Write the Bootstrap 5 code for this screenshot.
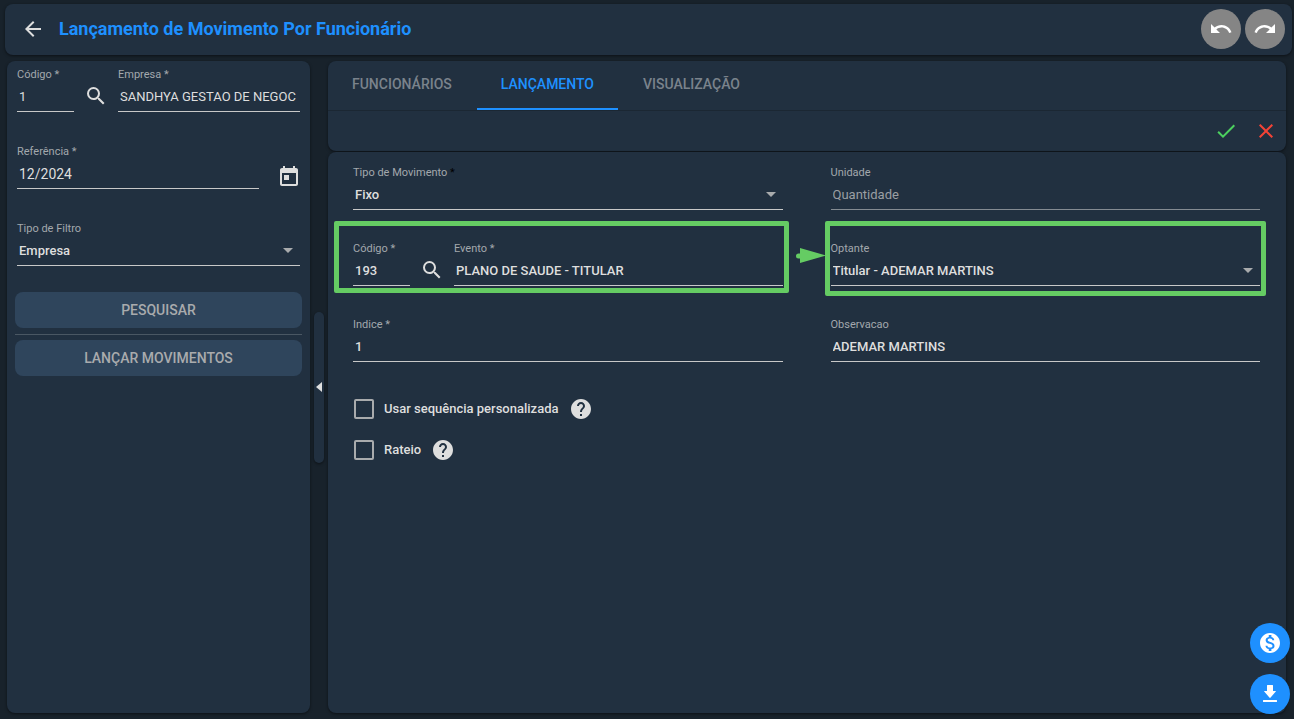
<!DOCTYPE html>
<html lang="pt-BR">
<head>
<meta charset="utf-8">
<meta name="viewport" content="width=device-width, initial-scale=1">
<title>Lançamento de Movimento Por Funcionário</title>
<link href="https://cdn.jsdelivr.net/npm/bootstrap@5.3.0/dist/css/bootstrap.min.css" rel="stylesheet">
<style>
  :root { --page: #18222b; --panel: #213040; --accent: #1e90ff; --ink: #dedede; --muted: #a3a8ad; --mark: #65cc63; }
  body { background: var(--page); color: var(--ink); font: 500 13px/16px Roboto, "Liberation Sans", sans-serif; }
  svg { display: block; fill: currentColor; flex: none; }
  .panel { background: var(--panel); border-radius: 8px; box-shadow: 0 1px 3px rgba(0,0,0,.5); }
  .app-shell { padding: 4px 2px 6px 5px; gap: 6px; }
  .topbar { min-height: 51px; padding: 4px 7px 6px 16px; }
  .topbar h1 { font-size: 18px; line-height: 24px; font-weight: 700; color: var(--accent); margin-left: 14px; }
  .icon-btn { background: none; border: 0; padding: 0; color: inherit; }
  .round-btn { width: 40px; height: 40px; border: 0; border-radius: 50%; padding: 0; color: #fff; background: #858585; display: grid; place-items: center; }
  .round-btn.fab { background: var(--accent); }
  .workspace { padding: 0 6px 0 2px; gap: 4px; }
  .filters { width: 303px; padding: 5px 8px; }
  .filter-fields { padding: 0 2px; gap: 31px; }
  .filter-actions { margin-top: 26px; }
  .fld label { display: block; height: 16px; font-size: 11px; font-weight: 400; line-height: 18px; color: var(--muted); white-space: nowrap; }
  .fld input, .fld select { display: block; width: 100%; height: 30px; padding: 0 2px; border: 0; border-bottom: 1px solid #c8c8c8; border-radius: 0; background-color: transparent; color: var(--ink); font: inherit; outline: 0; }
  .fld select { appearance: none; background: url("data:image/svg+xml,%3Csvg xmlns='http://www.w3.org/2000/svg' width='10' height='5'%3E%3Cpath fill='%23a9abad' d='M0 0h10L5 5z'/%3E%3C/svg%3E") no-repeat right 7px top 12px; }
  .fld option { background: var(--panel); }
  .fld input:disabled { color: #9b9fa3; border-color: #848b92; font-weight: 400; }
  .filters .fld input { font-weight: 400; }
  .filters .fld input.month { font-size: 14px; }
  .code-fld { width: 57px; }
  .lookup { gap: 10px; }
  .lookup .icon-btn { margin-bottom: 4px; }
  .date-row { gap: 18px; margin-right: -1px; }
  .action-btn { height: 36px; border: 0; border-radius: 8px; background: #2f455c; color: #a9abad; font-size: 14px; font-weight: 500; }
  .split { border-top: 1px solid #4a5763; margin: 6px 0 5px; }
  .collapse-handle { width: 10px; height: 151px; border: 0; padding: 0; border-radius: 5px; color: var(--ink); }
  .tab-strip { border-bottom: 1px solid #1b2733; gap: 1px; }
  .tab-strip button { height: 49px; padding: 0 24px 2px; border: 0; border-bottom: 2px solid transparent; background: none; color: #7a838c; font-size: 14px; font-weight: 500; }
  .tab-strip button.active { color: var(--accent); border-color: var(--accent); }
  .tools { height: 40px; padding: 0 8px; }
  .confirm { color: #4cd15f; }
  .cancel { color: #f44336; }
  .entry { padding: 12px 26px 12px 25px; margin-top: 1px; }
  .entry .row { row-gap: 30px; }
  .marked::before { content: ""; position: absolute; inset: -19px -6px -7px -19px; border: 5px solid var(--mark); border-radius: 2px; pointer-events: none; }
  .marked.tall::before { inset: -19px -6px -10px -6px; }
  .arrow-mark { position: absolute; left: -35px; top: 8px; color: var(--mark); }
  .checks { margin-top: 35px; gap: 17px; }
  .checks input { appearance: none; width: 20px; height: 20px; margin: 0 10px 0 1px; border: 2px solid #a9abad; border-radius: 2px; }
  .checks input:checked { background: var(--accent); }
  .checks label { margin-right: 10px; }
  .fabs { position: fixed; right: 4px; bottom: 5px; gap: 11px; }
</style>
</head>
<body>
<svg class="d-none" aria-hidden="true">
  <symbol id="search" viewBox="0 0 24 24"><path d="M15.5 14h-.79l-.28-.27A6.47 6.47 0 0 0 16 9.5 6.5 6.5 0 1 0 9.500 16c1.610 0 3.090-.59 4.230-1.570l.27.28v.79l5 4.990L20.490 19l-4.990-5zm-6 0C7.010 14 5 11.990 5 9.500S7.010 5 9.500 5 14 7.010 14 9.500 11.990 14 9.500 14z"/></symbol>
  <symbol id="help" viewBox="0 0 24 24"><path d="M12 2C6.480 2 2 6.480 2 12s4.480 10 10 10 10-4.480 10-10S17.520 2 12 2zm1 17h-2v-2h2v2zm2.070-7.750l-.9.92C13.450 12.900 13 13.500 13 15h-2v-.5c0-1.100.45-2.100 1.170-2.830l1.240-1.260c.37-.36.59-.86.59-1.410 0-1.100-.9-2-2-2s-2 .9-2 2H8c0-2.210 1.790-4 4-4s4 1.790 4 4c0 .88-.36 1.680-.93 2.250z"/></symbol>
</svg>

<div class="app-shell d-flex flex-column min-vh-100">
  <header class="topbar panel d-flex align-items-center">
    <button class="icon-btn" type="button" aria-label="Voltar"><svg width="24" height="24" viewBox="0 0 24 24"><path d="M20 11H7.830l5.590-5.590L12 4l-8 8 8 8 1.410-1.410L7.830 13H20v-2z"/></svg></button>
    <h1 class="mb-0 me-auto">Lançamento de Movimento Por Funcionário</h1>
    <div class="d-flex gap-1">
      <button class="round-btn" type="button" aria-label="Desfazer"><svg width="24" height="24" viewBox="0 0 24 24"><path d="M12.500 8c-2.650 0-5.050.99-6.900 2.600L2 7v9h9l-3.620-3.620c1.390-1.160 3.160-1.880 5.120-1.880 3.540 0 6.550 2.310 7.600 5.500l2.370-.78C21.080 11.030 17.150 8 12.500 8z"/></svg></button>
      <button class="round-btn" type="button" aria-label="Refazer"><svg width="24" height="24" viewBox="0 0 24 24"><path d="M18.400 10.600C16.550 8.990 14.150 8 11.500 8c-4.650 0-8.580 3.030-9.960 7.220L3.900 16c1.050-3.190 4.050-5.500 7.600-5.500 1.950 0 3.730.72 5.120 1.880L13 16h9V7l-3.600 3.600z"/></svg></button>
    </div>
  </header>

  <div class="workspace d-flex flex-grow-1">
    <aside class="filters panel flex-shrink-0">
      <div class="filter-fields d-flex flex-column">
        <div class="lookup d-flex align-items-end">
          <div class="fld code-fld"><label for="emp-cod">Código *</label><input id="emp-cod" value="1"></div>
          <button class="icon-btn" type="button" aria-label="Buscar empresa"><svg width="24" height="24"><use href="#search"/></svg></button>
          <div class="fld flex-fill"><label for="emp">Empresa *</label><input id="emp" value="SANDHYA GESTAO DE NEGOC"></div>
        </div>
        <div class="date-row d-flex align-items-end">
          <div class="fld flex-fill"><label for="ref">Referência *</label><input id="ref" class="month" value="12/2024"></div>
          <button class="icon-btn" type="button" aria-label="Abrir calendário"><svg width="24" height="24" viewBox="0 0 24 24"><path d="M19 3h-1V1h-2v2H8V1H6v2H5c-1.110 0-1.990.9-1.990 2L3 19c0 1.100.89 2 2 2h14c1.100 0 2-.9 2-2V5c0-1.100-.9-2-2-2zm0 16H5V8h14v11zM7 10h5v5H7z"/></svg></button>
        </div>
        <div class="fld"><label for="filtro">Tipo de Filtro</label><select id="filtro"><option>Empresa</option></select></div>
      </div>
      <div class="filter-actions d-flex flex-column">
        <button class="action-btn" type="button">PESQUISAR</button>
        <div class="split"></div>
        <button class="action-btn" type="button">LANÇAR MOVIMENTOS</button>
      </div>
    </aside>

    <button class="collapse-handle panel flex-shrink-0 align-self-center d-flex align-items-center justify-content-center" type="button" aria-label="Recolher painel"><svg width="6" height="10" viewBox="0 0 6 10"><path d="M6 0v10L0 5z"/></svg></button>

    <main class="flex-fill d-flex flex-column">
      <section class="panel">
        <div class="tab-strip d-flex" role="tablist">
          <button type="button" role="tab">FUNCIONÁRIOS</button>
          <button type="button" role="tab" class="active" aria-selected="true">LANÇAMENTO</button>
          <button type="button" role="tab">VISUALIZAÇÃO</button>
        </div>
        <div class="tools d-flex justify-content-end align-items-center gap-3">
          <button class="icon-btn confirm" type="button" aria-label="Confirmar"><svg width="24" height="24" viewBox="0 0 24 24"><path d="M9 16.170L4.830 12l-1.420 1.410L9 19 21 7l-1.410-1.410z"/></svg></button>
          <button class="icon-btn cancel" type="button" aria-label="Cancelar"><svg width="24" height="24" viewBox="0 0 24 24"><path d="M19 6.410L17.590 5 12 10.590 6.410 5 5 6.410 10.590 12 5 17.590 6.410 19 12 13.410 17.590 19 19 17.590 13.410 12z"/></svg></button>
        </div>
      </section>

      <form class="entry panel flex-grow-1">
        <div class="row gx-5">
          <div class="col-6"><div class="fld"><label for="tipo">Tipo de Movimento <span class="text-black">*</span></label><select id="tipo"><option>Fixo</option></select></div></div>
          <div class="col-6"><div class="fld"><label for="unid">Unidade</label><input id="unid" value="Quantidade" disabled></div></div>
          <div class="col-6">
            <div class="marked lookup position-relative d-flex align-items-end">
              <div class="fld code-fld"><label for="ev-cod">Código *</label><input id="ev-cod" value="193"></div>
              <button class="icon-btn" type="button" aria-label="Buscar evento"><svg width="24" height="24"><use href="#search"/></svg></button>
              <div class="fld flex-fill"><label for="evento">Evento *</label><input id="evento" value="PLANO DE SAUDE - TITULAR"></div>
            </div>
          </div>
          <div class="col-6">
            <div class="marked tall fld position-relative">
              <svg class="arrow-mark" width="30" height="16" viewBox="0 0 30 16"><path d="M2.500 5.500H4V0l26 7.500L4 15v-4.500H2.500a2.500 2.500 0 0 1 0-5z"/></svg>
              <label for="opt">Optante</label><select id="opt"><option>Titular - ADEMAR MARTINS</option></select>
            </div>
          </div>
          <div class="col-6"><div class="fld"><label for="indice">Indice *</label><input id="indice" value="1"></div></div>
          <div class="col-6"><div class="fld"><label for="obs">Observacao</label><input id="obs" value="ADEMAR MARTINS"></div></div>
        </div>
        <div class="checks d-flex flex-column">
          <div class="d-flex align-items-center"><input type="checkbox" id="seq"><label for="seq">Usar sequência personalizada</label><svg width="24" height="24"><use href="#help"/></svg></div>
          <div class="d-flex align-items-center"><input type="checkbox" id="rateio"><label for="rateio">Rateio</label><svg width="24" height="24"><use href="#help"/></svg></div>
        </div>
      </form>
    </main>
  </div>
</div>

<div class="fabs d-flex flex-column">
  <button class="round-btn fab" type="button" aria-label="Valores"><svg width="24" height="24" viewBox="0 0 24 24"><path d="M12 2C6.480 2 2 6.480 2 12s4.480 10 10 10 10-4.480 10-10S17.520 2 12 2zm1.410 16.090V20h-2.670v-1.930c-1.710-.36-3.160-1.460-3.270-3.400h1.960c.1 1.050.82 1.870 2.650 1.870 1.960 0 2.400-.98 2.400-1.590 0-.83-.44-1.610-2.670-2.140-2.480-.6-4.180-1.620-4.180-3.670 0-1.720 1.390-2.840 3.110-3.210V4h2.670v1.950c1.860.45 2.790 1.860 2.850 3.390H14.300c-.05-1.110-.64-1.870-2.220-1.870-1.500 0-2.400.68-2.400 1.640 0 .84.65 1.390 2.670 1.910s4.180 1.390 4.180 3.910c-.01 1.830-1.380 2.830-3.120 3.160z"/></svg></button>
  <button class="round-btn fab" type="button" aria-label="Baixar"><svg width="24" height="24" viewBox="0 0 24 24"><path d="M9.500 3h5a.5.5 0 0 1 .5.5V9h2.500q.8 0 .3.600l-5.200 6q-.6.600-1.200 0l-5.200-6Q5.700 9 6.500 9H9V3.500a.5.5 0 0 1 .5-.5zM5.500 18h13a.5.5 0 0 1 .5.500v1a.5.5 0 0 1-.5.500h-13a.5.5 0 0 1-.5-.5v-1a.5.5 0 0 1 .5-.5z"/></svg></button>
</div>
<script src="https://cdn.jsdelivr.net/npm/bootstrap@5.3.0/dist/js/bootstrap.bundle.min.js"></script>
</body>
</html>
